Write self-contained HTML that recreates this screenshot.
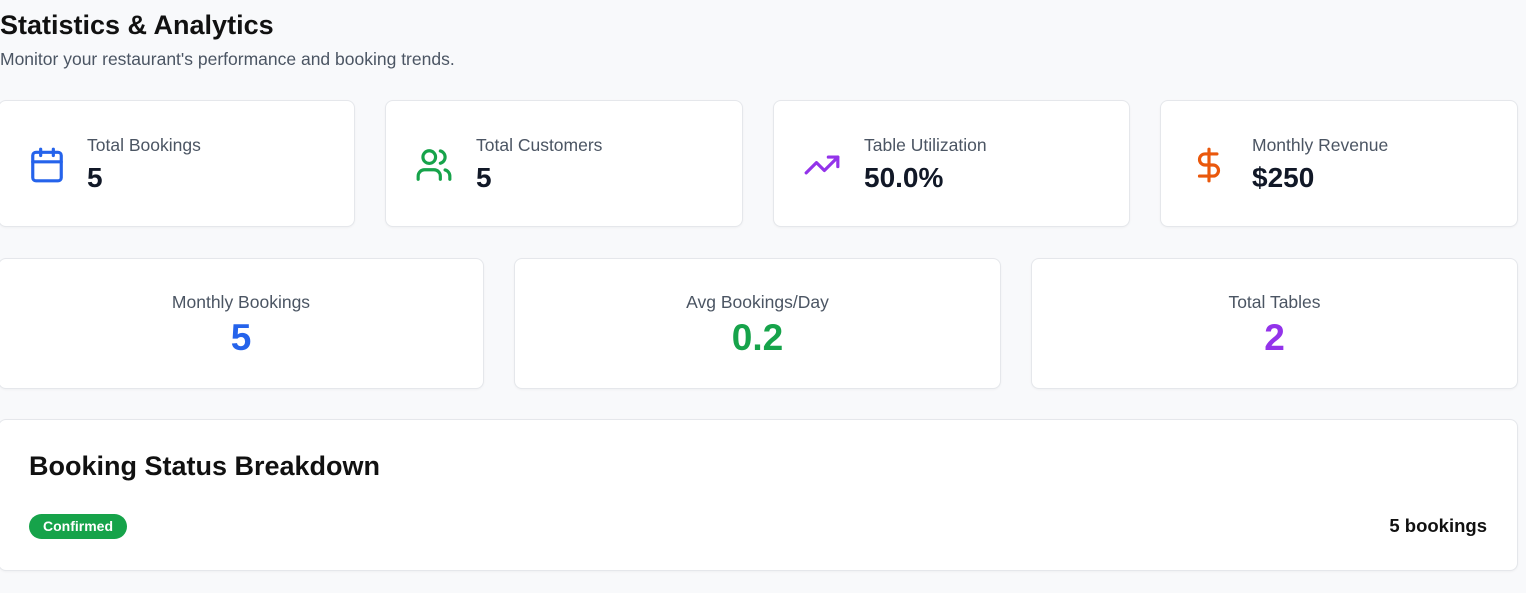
<!DOCTYPE html>
<html><head><meta charset="utf-8"><style>
*{box-sizing:border-box;margin:0;padding:0}
body{width:1526px;height:593px;background:#f8f9fb;font-family:"Liberation Sans","DejaVu Sans",sans-serif;position:relative;overflow:hidden;color:#111}
h1{position:absolute;left:0;top:10px;font-size:27px;font-weight:600;color:#111;}
.sub{position:absolute;left:0;top:49px;font-size:17.5px;color:#4b5563}
.card{position:absolute;background:#fff;border:1px solid #e5e7eb;border-radius:8px;box-shadow:0 1px 2px rgba(0,0,0,.04)}
.ic{position:absolute;left:29px;top:45px;width:38px;height:38px}
.lbl{position:absolute;left:88px;top:34px;font-size:17.5px;color:#4b5563}
.val{position:absolute;left:88px;top:61px;font-size:28px;font-weight:700;color:#111827}
.c2 .l{position:absolute;left:0;right:0;top:33px;text-align:center;font-size:17.5px;color:#4b5563}
.c2 .v{position:absolute;left:0;right:0;top:58px;text-align:center;font-size:37px;font-weight:700}
</style></head><body>
<h1>Statistics &amp; Analytics</h1>
<div class="sub">Monitor your restaurant's performance and booking trends.</div>

<div class="card" style="left:-2px;top:100px;width:357px;height:127px">
<svg class="ic" viewBox="0 0 24 24" fill="none" stroke="#2563eb" stroke-width="2" stroke-linecap="round" stroke-linejoin="round"><rect x="3" y="4" width="18" height="18" rx="2"/><path d="M16 2v4M8 2v4M3 10h18"/></svg>
<div class="lbl">Total Bookings</div><div class="val">5</div></div>

<div class="card" style="left:385px;top:100px;width:358px;height:127px">
<svg class="ic" viewBox="0 0 24 24" fill="none" stroke="#16a34a" stroke-width="2" stroke-linecap="round" stroke-linejoin="round"><path d="M16 21v-2a4 4 0 0 0-4-4H6a4 4 0 0 0-4 4v2"/><circle cx="9" cy="7" r="4"/><path d="M22 21v-2a4 4 0 0 0-3-3.87M16 3.13a4 4 0 0 1 0 7.75"/></svg>
<div class="lbl" style="left:90px">Total Customers</div><div class="val" style="left:90px">5</div></div>

<div class="card" style="left:773px;top:100px;width:357px;height:127px">
<svg class="ic" viewBox="0 0 24 24" fill="none" stroke="#9333ea" stroke-width="2" stroke-linecap="round" stroke-linejoin="round"><path d="M22 7l-8.5 8.5-5-5L2 17"/><path d="M16 7h6v6"/></svg>
<div class="lbl" style="left:90px">Table Utilization</div><div class="val" style="left:90px">50.0%</div></div>

<div class="card" style="left:1160px;top:100px;width:358px;height:127px">
<svg class="ic" viewBox="0 0 24 24" fill="none" stroke="#ea580c" stroke-width="2" stroke-linecap="round" stroke-linejoin="round"><path d="M12 2v20M17 5H9.5a3.5 3.5 0 0 0 0 7h5a3.5 3.5 0 0 1 0 7H6"/></svg>
<div class="lbl" style="left:91px">Monthly Revenue</div><div class="val" style="left:91px">$250</div></div>

<div class="card c2" style="left:-2px;top:258px;width:486px;height:131px"><div class="l">Monthly Bookings</div><div class="v" style="color:#2563eb">5</div></div>
<div class="card c2" style="left:514px;top:258px;width:487px;height:131px"><div class="l">Avg Bookings/Day</div><div class="v" style="color:#16a34a">0.2</div></div>
<div class="card c2" style="left:1031px;top:258px;width:487px;height:131px"><div class="l">Total Tables</div><div class="v" style="color:#9333ea">2</div></div>

<div class="card" style="left:-2px;top:419px;width:1520px;height:152px">
<div style="position:absolute;left:30px;top:31px;font-size:27px;font-weight:600;color:#111">Booking Status Breakdown</div>
<div style="position:absolute;left:30px;top:94px;height:25px;padding:0 14px;border-radius:13px;background:#16a34a;color:#fff;font-size:14px;font-weight:700;line-height:25px">Confirmed</div>
<div style="position:absolute;right:30px;top:95px;font-size:18.5px;font-weight:600;color:#111">5 bookings</div>
</div>
</body></html>
